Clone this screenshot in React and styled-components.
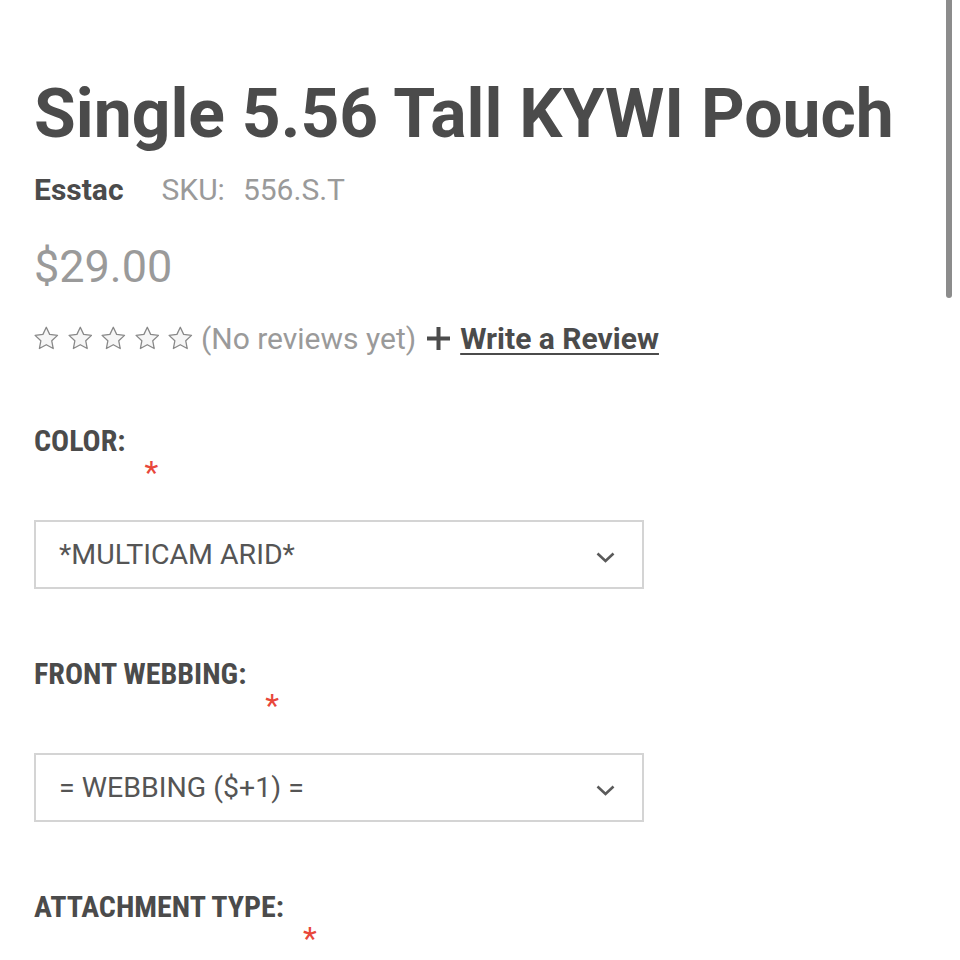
import React from 'react';
import styled, { createGlobalStyle } from 'styled-components';

const GlobalStyle = createGlobalStyle`
  html, body {
    margin: 0;
    padding: 0;
    background: #ffffff;
  }
  body {
    font-family: Roboto, 'Liberation Sans', sans-serif;
    color: #4b4b4b;
  }
`;

const Page = styled.main`
  padding: 73px 0 0 34px;
  width: 960px;
  height: 960px;
  box-sizing: border-box;
  overflow: hidden;
`;

const ScrollThumb = styled.div`
  position: fixed;
  top: 0;
  right: 8px;
  width: 6px;
  height: 298px;
  border-radius: 0 0 3px 3px;
  background: #8c8c8c;
`;

const Title = styled.h1`
  margin: 0;
  font-size: 67.8px;
  line-height: 82px;
  font-weight: 700;
  color: #4b4b4b;
  white-space: nowrap;
`;

const BrandRow = styled.div`
  margin-top: 17px;
  display: flex;
  align-items: baseline;
  font-size: 30px;
  line-height: 36px;
`;

const Brand = styled.span`
  font-weight: 700;
  color: #4b4b4b;
  margin-right: 38px;
`;

const Sku = styled.span`
  color: #9a9a9a;
  margin-right: ${p => p.$label ? '18px' : '0'};
`;

const Price = styled.div`
  margin-top: 32px;
  font-size: 45px;
  line-height: 54px;
  color: #9a9a9a;
`;

const RatingRow = styled.div`
  margin-top: 24px;
  display: flex;
  align-items: center;
  height: 40px;
  font-size: 30px;
`;

const Stars = styled.div`
  display: flex;
  gap: 9px;
  margin-right: 8px;
`;

const NoReviews = styled.span`
  color: #9a9a9a;
  margin-right: 10px;
`;

const WriteLink = styled.a`
  margin-left: 9px;
  color: #4b4b4b;
  font-weight: 700;
  font-size: 30px;
  text-decoration: underline;
  text-decoration-thickness: 2px;
  text-underline-offset: 4px;
`;

const Field = styled.div`
  margin-top: ${p => p.$first ? '65px' : '67px'};
`;

const Label = styled.label`
  display: inline-grid;
  grid-template-columns: auto auto;
  color: #4b4b4b;
`;

const LabelText = styled.span`
  grid-row: 1;
  grid-column: 1;
  font-family: 'Roboto Condensed', Roboto, 'Liberation Sans', sans-serif;
  font-weight: 700;
  font-size: 30px;
  line-height: 36px;
`;

const Required = styled.small`
  grid-row: 2;
  grid-column: 2;
  margin: -3px 0 0 19px;
  font-size: 32px;
  line-height: 32px;
  color: #e8473b;
`;

const SelectBox = styled.div`
  margin-top: 32px;
  width: 610px;
  height: 69px;
  box-sizing: border-box;
  border: 2px solid #d4d4d4;
  display: flex;
  align-items: center;
  justify-content: space-between;
  padding: 0 27px 0 23px;
  font-size: 28.5px;
  color: #555555;
`;

const ChevronIcon = styled.svg`
  margin-top: 5px;
`;

function Star() {
  return (
    <svg width="24.6" height="24" viewBox="0 0 24 23">
      <path
        d="M12 1L15.29 7.97L22.94 8.95L17.33 14.23L18.76 21.8L12 18.1L5.24 21.8L6.67 14.23L1.06 8.95L8.71 7.97Z"
        fill="#f6f6f6"
        stroke="#888888"
        strokeWidth="1.25"
        strokeLinejoin="round"
      />
    </svg>
  );
}

function Plus() {
  return (
    <svg width="25" height="25" viewBox="0 0 25 25">
      <path d="M12.5 1v23M1 12.5h23" stroke="#4b4b4b" strokeWidth="4" />
    </svg>
  );
}

function Chevron() {
  return (
    <ChevronIcon width="19" height="11" viewBox="0 0 19 11">
      <path d="M1.5 1.5l8 7.5 8-7.5" fill="none" stroke="#5a5a5a" strokeWidth="2.6" />
    </ChevronIcon>
  );
}

const FIELDS = [
  { label: 'COLOR:', value: '*MULTICAM ARID*' },
  { label: 'FRONT WEBBING:', value: '= WEBBING ($+1) =' },
  { label: 'ATTACHMENT TYPE:', value: '' },
];

export default function App() {
  return (
    <>
      <GlobalStyle />
      <ScrollThumb />
      <Page>
        <Title>Single 5.56 Tall KYWI Pouch</Title>
        <BrandRow>
          <Brand>Esstac</Brand>
          <Sku $label>SKU:</Sku>
          <Sku>556.S.T</Sku>
        </BrandRow>
        <Price>$29.00</Price>
        <RatingRow>
          <Stars>
            {[0, 1, 2, 3, 4].map(i => <Star key={i} />)}
          </Stars>
          <NoReviews>(No reviews yet)</NoReviews>
          <Plus />
          <WriteLink href="#">Write a Review</WriteLink>
        </RatingRow>
        {FIELDS.map((f, i) => (
          <Field key={f.label} $first={i === 0}>
            <Label>
              <LabelText>{f.label}</LabelText>
              <Required>*</Required>
            </Label>
            {f.value && (
              <SelectBox>
                <span>{f.value}</span>
                <Chevron />
              </SelectBox>
            )}
          </Field>
        ))}
      </Page>
    </>
  );
}
